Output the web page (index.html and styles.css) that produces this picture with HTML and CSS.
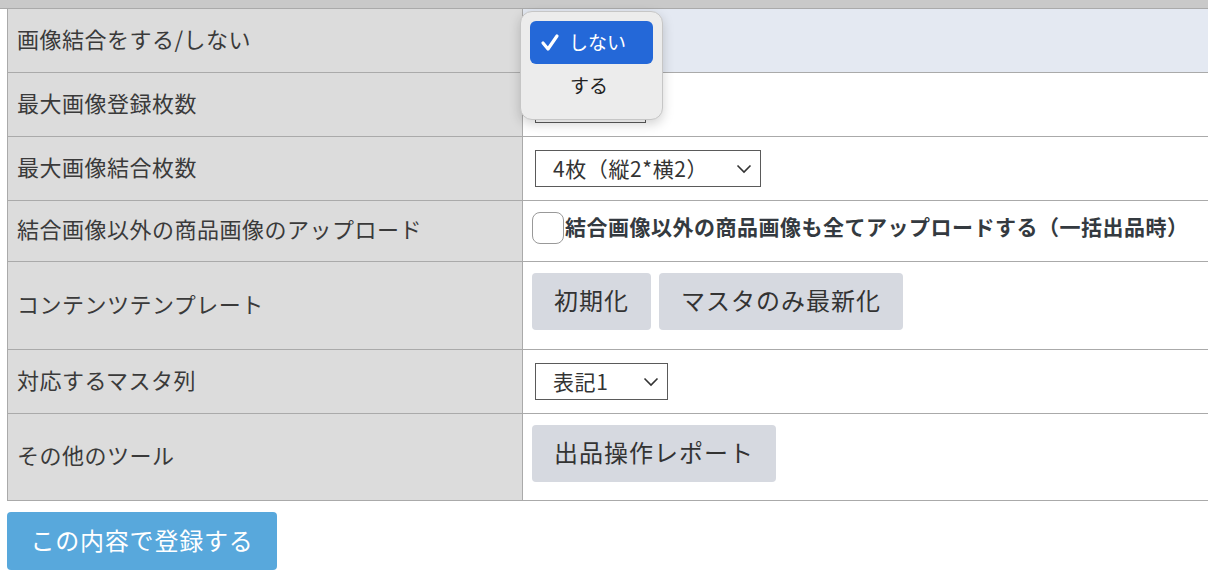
FILE: index.html
```html
<!DOCTYPE html>
<html lang="ja">
<head>
<meta charset="utf-8">
<title>設定</title>
<link rel="stylesheet" href="styles.css">
</head>
<body>
<div class="topstrip"></div>
<div class="form">
  <div class="label r64">画像結合をする/しない</div>
  <div class="value r64 hl">
    <div class="popup">
      <div class="opt sel">
        <svg class="check" width="20" height="20" viewBox="0 0 20 20"><polyline points="3,10 8,16 17,3" fill="none" stroke="#fff" stroke-width="3.2" stroke-linecap="round" stroke-linejoin="round"/></svg>
        <span>しない</span>
      </div>
      <div class="opt"><span>する</span></div>
    </div>
  </div>

  <div class="label r64">最大画像登録枚数</div>
  <div class="value r64 center"><div class="fsel w110"></div></div>

  <div class="label r64">最大画像結合枚数</div>
  <div class="value r64 center">
    <div class="fsel w226"><span>4枚（縦2*横2）</span>
      <svg class="chev" width="16" height="10" viewBox="0 0 16 10"><polyline points="1.5,1.5 8,8 14.5,1.5" fill="none" stroke="#333" stroke-width="1.6"/></svg>
    </div>
  </div>

  <div class="label r61">結合画像以外の商品画像のアップロード</div>
  <div class="value r61 top">
    <label class="chk"><span class="box"></span><span class="chktext">結合画像以外の商品画像も全てアップロードする（一括出品時）</span></label>
  </div>

  <div class="label r88">コンテンツテンプレート</div>
  <div class="value r88 btns">
    <button class="btn">初期化</button>
    <button class="btn">マスタのみ最新化</button>
  </div>

  <div class="label r64">対応するマスタ列</div>
  <div class="value r64 center">
    <div class="fsel w133"><span>表記1</span>
      <svg class="chev" width="16" height="10" viewBox="0 0 16 10"><polyline points="1.5,1.5 8,8 14.5,1.5" fill="none" stroke="#333" stroke-width="1.6"/></svg>
    </div>
  </div>

  <div class="label r87">その他のツール</div>
  <div class="value r87 btns">
    <button class="btn">出品操作レポート</button>
  </div>
</div>
<button class="submit">この内容で登録する</button>
</body>
</html>
```
FILE: styles.css
```css
html, body {
  margin: 0;
  padding: 0;
  background: #fff;
  overflow: hidden;
  font-family: "Noto Sans CJK JP", "Noto Sans", sans-serif;
  color: #333;
}
.topstrip {
  height: 9px;
  box-sizing: border-box;
  background: #c9c9c9;
  border-bottom: 1px solid #aaa;
}
.form {
  margin-left: 7px;
  width: 1240px;
  border-left: 1px solid #aaa;
  display: grid;
  grid-template-columns: 515px 1fr;
}
.label, .value {
  box-sizing: border-box;
  border-bottom: 1px solid #aaa;
}
.label {
  background: #dcdcdc;
  border-right: 1px solid #aaa;
  font-size: 22px;
  letter-spacing: 0.5px;
  color: #3a3a3a;
  padding-left: 9px;
  display: flex;
  align-items: center;
  padding-bottom: 6px;
}
.r64 { height: 64px; }
.r61 { height: 61px; }
.r88 { height: 88px; }
.r87 { height: 87px; }
.value {
  background: #fff;
  padding-left: 12px;
}
.value.hl {
  background: #e4e9f2;
  position: relative;
}
.value.center {
  display: flex;
  align-items: center;
}
.value.top {
  padding-top: 10px;
  padding-left: 9px;
}
.value.btns {
  padding-top: 11px;
  padding-left: 9px;
  display: flex;
  align-items: flex-start;
  gap: 8px;
}
.fsel {
  box-sizing: border-box;
  height: 37px;
  border: 1px solid #5a5a5a;
  background: #fff;
  display: flex;
  align-items: center;
  justify-content: space-between;
  padding-left: 17px;
  padding-right: 8px;
  padding-bottom: 2px;
  font-size: 21px;
  letter-spacing: 0.6px;
  color: #333;
}
.fsel .chev { margin-top: 2px; }
.w110 { width: 111px; }
.w226 { width: 226px; }
.w133 { width: 133px; }
.chev { display: block; }
.chk {
  display: flex;
  align-items: flex-start;
}
.box {
  width: 30px;
  height: 30px;
  border: 1px solid #999;
  border-radius: 8px;
  background: #fff;
  flex: none;
  margin-top: 1px;
}
.chktext {
  font-size: 21px;
  font-weight: bold;
  color: #343a40;
  line-height: 30px;
  letter-spacing: 0.5px;
  margin-left: 1px;
}
.btn {
  font-family: inherit;
  font-size: 24px;
  color: #333;
  background: #d6d9e0;
  border: none;
  border-radius: 4px;
  height: 57px;
  padding: 0 22px 4px;
  letter-spacing: 1px;
}
.submit {
  display: block;
  margin: 11px 0 0 7px;
  width: 270px;
  height: 58px;
  background: #58a8dc;
  border: none;
  border-radius: 4px;
  color: #fff;
  font-family: inherit;
  font-size: 24px;
  letter-spacing: 0.8px;
  padding: 0 0 4px;
}
.popup {
  position: absolute;
  left: -3px;
  top: 2px;
  width: 143px;
  height: 109px;
  box-sizing: border-box;
  background: #ececec;
  border: 1px solid #c6c6c6;
  border-radius: 12px;
  box-shadow: 0 4px 12px rgba(0,0,0,0.18);
  padding: 9px 9px;
  z-index: 5;
}
.opt {
  height: 43px;
  border-radius: 6px;
  display: flex;
  align-items: center;
  font-size: 19px;
  color: #222;
  padding-left: 40px;
  padding-bottom: 2px;
  box-sizing: border-box;
}
.opt.sel {
  background: #2468d8;
  color: #fff;
  padding-left: 10px;
}
.opt.sel span { margin-left: 9px; }
.check { display: block; margin-top: 2px; }
```
